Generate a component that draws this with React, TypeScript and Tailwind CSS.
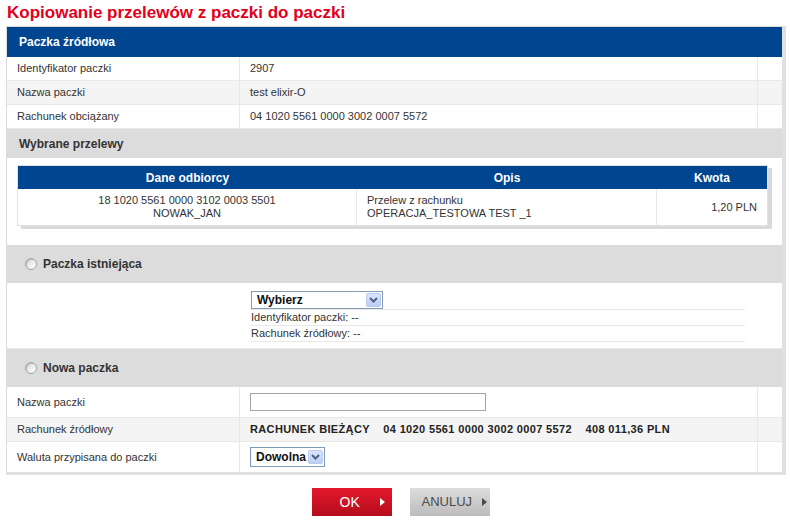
import type { ReactNode } from "react";

const Radio = () => (
    <span className="w-[12px] h-[12px] rounded-full border border-[#a3a3a3] bg-gradient-to-br from-[#dcdcdc] to-white shadow-[inset_1px_1px_1px_#bdbdbd]" />
);

const Arrow = () => (
    <span className="w-[15px] h-[14px] shrink-0 rounded-[2px] border border-[#b9c9ef] bg-gradient-to-b from-[#dce6fd] to-[#bcccf4] flex items-center justify-center">
        <svg width="9" height="6" viewBox="0 0 9 6">
            <path d="M1 1 L4.5 4.5 L8 1" fill="none" stroke="#4d6185" strokeWidth="2" />
        </svg>
    </span>
);

const Row = ({ label, children, className }: { label?: string; children?: ReactNode; className: string }) => (
    <div className={`flex border-b border-[#e8e8e8] ${className}`}>
        <div className="w-[233px] shrink-0 border-r border-[#e8e8e8] pl-[10px] flex items-center">{label}</div>
        <div className="flex-1 pl-[10px] flex items-center">{children}</div>
        <div className="w-[25px] shrink-0 border-l border-[#e8e8e8]" />
    </div>
);

const Band = ({ children, className }: { children: ReactNode; className: string }) => (
    <div className={`bg-[#dcdcdc] flex items-center gap-[6px] font-bold text-[12px] text-[#333] ${className}`}>{children}</div>
);

const Triangle = ({ color }: { color: string }) => (
    <svg width="5" height="8" viewBox="0 0 5 8">
        <path d="M0 0 L5 4 L0 8 Z" fill={color} />
    </svg>
);

export default function App() {
    return (
        <div className="w-[790px] h-[521px] bg-white text-[11px] text-[#333] font-['Liberation_Sans',Arial,sans-serif]">
            <h1 className="h-[26px] pl-[7px] pt-[3px] text-[17px] leading-[20px] font-bold text-[#e3001b]">
                Kopiowanie przelewów z paczki do paczki
            </h1>

            <div className="ml-[6px] w-[780px] border-l border-t border-[#dcdcdc] border-r-4 border-b-[3px] border-r-[#e0e0e0] border-b-[#e0e0e0]">
                <div className="h-[30px] bg-[#004590] text-white font-bold text-[12px] flex items-center pl-[12px]">
                    Paczka źródłowa
                </div>
                <Row label="Identyfikator paczki" className="h-[24px] bg-white">2907</Row>
                <Row label="Nazwa paczki" className="h-[24px] bg-[#f4f4f4]">test elixir-O</Row>
                <Row label="Rachunek obciążany" className="h-[24px] bg-white">04 1020 5561 0000 3002 0007 5572</Row>

                <Band className="h-[29px] pl-[12px]">Wybrane przelewy</Band>
                <div className="h-[87px] pt-[7px] pl-[10px]">
                    <div className="w-[751px] border border-[#e2e2e2] shadow-[4px_3px_0_#d9d9d9]">
                        <div className="h-[23px] bg-[#004590] text-white font-bold text-[12px] flex items-center">
                            <div className="w-[339px] text-center">Dane odbiorcy</div>
                            <div className="w-[300px] text-center">Opis</div>
                            <div className="flex-1 text-center">Kwota</div>
                        </div>
                        <div className="h-[36px] flex bg-white leading-[13px]">
                            <div className="w-[339px] border-r border-[#e8e8e8] flex flex-col items-center justify-center">
                                <span>18 1020 5561 0000 3102 0003 5501</span>
                                <span>NOWAK_JAN</span>
                            </div>
                            <div className="w-[300px] border-r border-[#e8e8e8] pl-[10px] flex flex-col justify-center">
                                <span>Przelew z rachunku</span>
                                <span>OPERACJA_TESTOWA TEST _1</span>
                            </div>
                            <div className="flex-1 pr-[10px] flex items-center justify-end">1,20 PLN</div>
                        </div>
                    </div>
                </div>

                <Band className="h-[38px] pl-[18px]">
                    <Radio />
                    Paczka istniejąca
                </Band>
                <Row className="h-[66px] bg-white items-start">
                    <div className="w-[495px] self-start pt-[8px] text-[11px]">
                        <div className="h-[19px] border-b border-[#e8e8e8] pl-[1px]">
                            <div className="w-[132px] h-[18px] border border-[#7f9db9] bg-white flex items-center justify-between pl-[5px] pr-[1px]">
                                <span className="font-bold text-[12px] text-[#111]">Wybierz</span>
                                <Arrow />
                            </div>
                        </div>
                        <div className="h-[16px] border-b border-[#e8e8e8] pl-[1px] leading-[15px]">Identyfikator paczki: --</div>
                        <div className="h-[16px] border-b border-[#e8e8e8] pl-[1px] leading-[15px]">Rachunek źródłowy: --</div>
                    </div>
                </Row>

                <Band className="h-[38px] pl-[18px]">
                    <Radio />
                    Nowa paczka
                </Band>
                <Row label="Nazwa paczki" className="h-[31px] bg-white">
                    <div className="w-[236px] h-[18px] border border-[#a5a5a5] bg-white" />
                </Row>
                <Row label="Rachunek źródłowy" className="h-[24px] bg-[#f4f4f4]">
                    <span className="font-bold whitespace-pre text-[#222] tracking-[0.35px]">
                        RACHUNEK BIEŻĄCY    04 1020 5561 0000 3002 0007 5572    408 011,36 PLN
                    </span>
                </Row>
                <Row label="Waluta przypisana do paczki" className="h-[30px] bg-white border-b-0">
                    <div className="w-[75px] h-[20px] border border-[#7f9db9] bg-white flex items-center justify-between pl-[5px] pr-[1px]">
                        <span className="font-bold text-[12px] text-[#111]">Dowolna</span>
                        <Arrow />
                    </div>
                </Row>
            </div>

            <div className="flex justify-center gap-[18px] mt-[13px] pl-[11px]">
                <button className="w-[80px] h-[28px] bg-gradient-to-b from-[#e3182c] to-[#b50d1c] text-white text-[14px] flex items-center pl-[28px] gap-[20px]">
                    OK
                    <Triangle color="#ffffff" />
                </button>
                <button className="w-[80px] h-[28px] bg-gradient-to-b from-[#dcdcdc] to-[#bcbcbc] text-[#4a4a4a] text-[13px] flex items-center pl-[12px] gap-[10px]">
                    ANULUJ
                    <Triangle color="#4a4a4a" />
                </button>
            </div>
        </div>
    );
}
